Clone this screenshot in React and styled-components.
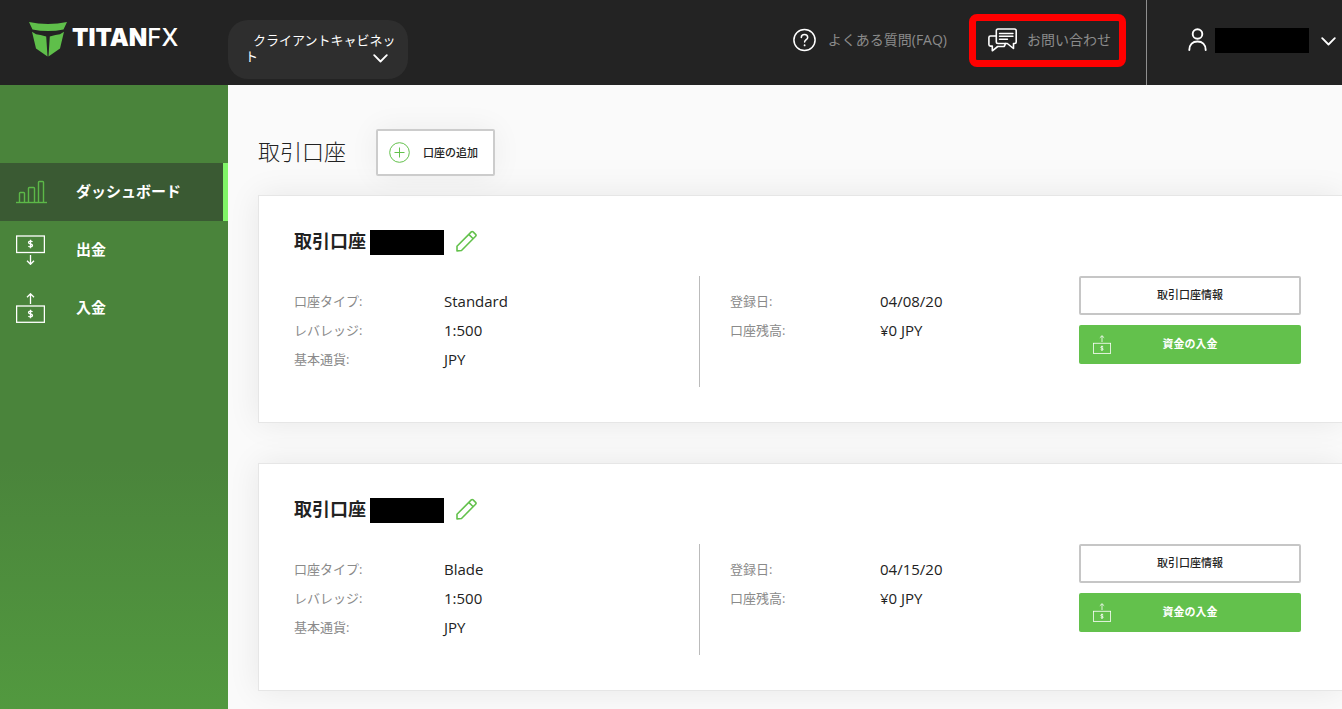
import React from "react";
import styled, { createGlobalStyle, css } from "styled-components";

const GlobalStyle = createGlobalStyle`
  *, *::before, *::after { box-sizing: border-box; }
  body {
    margin: 0;
    background: #fafafa;
    color: #222;
    font-family: "Open Sans", "Noto Sans CJK JP", sans-serif;
    font-size: 13px;
    overflow-x: hidden;
  }
  button { font-family: inherit; cursor: pointer; }
  a { text-decoration: none; color: inherit; }
  h1, h2, p, dl, dd, ul { margin: 0; padding: 0; }
`;

const Page = styled.div`
  min-height: 100vh;
  display: flex;
  flex-direction: column;
`;

const Header = styled.header`
  display: flex;
  height: 85px;
  background: #232323;
  color: #fff;
`;

const LogoLink = styled.a`
  flex: 0 0 228px;
  display: flex;
  align-items: flex-start;
  gap: 4px;
  padding: 20px 0 0 28px;
`;

const LogoText = styled.span`
  padding-top: 3px;
  font-family: Inter, sans-serif;
  font-size: 24px;
  line-height: 30px;
  font-weight: 900;
  color: #fff;
`;

const LogoLight = styled.span`
  font-weight: 500;
`;

const CabinetButton = styled.button`
  position: relative;
  align-self: flex-start;
  width: 180px;
  height: 59px;
  margin-top: 20px;
  padding: 0 8px 4px 17px;
  border: 0;
  border-radius: 20px;
  background: #2e2e2e;
  color: #fff;
  font-size: 13px;
  line-height: 16px;
  text-align: left;
  text-indent: 8px;
`;

const CabinetArrow = styled.span`
  position: absolute;
  right: 20px;
  bottom: 16px;
  display: flex;
`;

const HeaderNav = styled.nav`
  flex: 1;
  display: flex;
  align-items: flex-start;
  justify-content: flex-end;
  gap: 22px;
  padding: 14px 20px 0 0;
`;

const HeaderLink = styled.a`
  display: flex;
  align-items: center;
  height: 53px;
  padding-bottom: 2px;
  gap: ${(p) => (p.$marked ? "10px" : "12px")};
  font-size: 14px;
  line-height: 20px;
  color: #8b8b8b;
  white-space: nowrap;
  ${(p) =>
    p.$marked &&
    css`
      padding: 0 8px 2px 12px;
      border: 7px solid #f00;
      border-radius: 8px;
    `}
`;

const UserButton = styled.button`
  display: flex;
  align-items: flex-start;
  height: 85px;
  padding: 28px 6px 0 41px;
  border: 0;
  border-left: 1px solid #8f8f8f;
  background: none;
  color: #fff;
`;

const Redacted = styled.span`
  display: block;
  width: ${(p) => p.$width};
  height: 25px;
  background: #000;
`;

const UserName = styled(Redacted)`
  margin: 0 12px 0 8px;
`;

const UserArrow = styled.span`
  display: flex;
  padding-top: 9px;
`;

const Body = styled.div`
  flex: 1;
  display: flex;
`;

const Sidebar = styled.aside`
  flex: 0 0 228px;
  padding-top: 78px;
  background: linear-gradient(#4a843b 0%, #4a843b 60%, #52993f 100%);
`;

const SideLink = styled.a`
  display: flex;
  align-items: center;
  height: 58px;
  padding: 0 0 2px 16px;
  gap: 29px;
  color: #fff;
  font-size: 15px;
  line-height: 20px;
  font-weight: 700;
  ${(p) =>
    p.$active &&
    css`
      background: #3a5a33;
      border-right: 5px solid #80f568;
    `}
`;

const SideIcon = styled.span`
  display: flex;
  width: 31px;
  padding-top: 2px;
`;

const Main = styled.main`
  flex: 1;
  min-width: 0;
  padding: 44px 0 0 30px;
  overflow: hidden;
`;

const Heading = styled.div`
  display: flex;
  align-items: center;
  gap: 30px;
  margin-bottom: 19px;
`;

const Title = styled.h1`
  padding-bottom: 4px;
  font-size: 22px;
  line-height: 32px;
  font-weight: 300;
`;

const AddButton = styled.button`
  display: flex;
  align-items: center;
  gap: 13px;
  height: 47px;
  padding: 0 15px 0 11px;
  border: 2px solid #ccc;
  border-radius: 2px;
  background: #fff;
  box-shadow: 0 0 30px rgba(0, 0, 0, 0.06);
  color: #222;
  font-size: 11px;
  line-height: 16px;
  font-weight: 500;
`;

const Card = styled.section`
  padding: 34px 41px 35px 35px;
  margin-bottom: ${(p) => (p.$last ? "0" : "40px")};
  border: 1px solid #e6e6e6;
  border-right: 0;
  background: #fff;
  box-shadow: 0 0 30px rgba(0, 0, 0, 0.08);
`;

const CardHead = styled.div`
  display: flex;
  align-items: center;
  height: 25px;
  margin-bottom: 21px;
`;

const CardTitle = styled.h2`
  margin-right: 4px;
  padding-bottom: 2px;
  font-size: 18px;
  line-height: 25px;
  font-weight: 700;
`;

const EditButton = styled.button`
  display: flex;
  margin-left: 12px;
  padding: 0 0 4px;
  border: 0;
  background: none;
`;

const CardGrid = styled.div`
  display: grid;
  grid-template-columns: 406fr 379fr 222px;
`;

const Details = styled.dl`
  min-height: 111px;
  padding-top: 11px;
  padding-left: ${(p) => (p.$divided ? "0" : "30px")};
  border-right: ${(p) => (p.$divided ? "1px solid #bbb" : "0")};
`;

const Detail = styled.div`
  display: flex;
  height: 29px;
  line-height: 29px;
`;

const Term = styled.dt`
  flex: 0 0 150px;
  font-size: 13px;
  font-weight: 400;
  color: #8a8a8a;
`;

const Value = styled.dd`
  font-size: 15px;
  line-height: 28px;
`;

const Actions = styled.div`
  display: flex;
  flex-direction: column;
  gap: 10px;
`;

const ActionButton = styled.button`
  display: grid;
  grid-template-columns: 19px 1fr 19px;
  align-items: center;
  height: 39px;
  padding: 0 ${(p) => (p.$primary ? "14px" : "12px")};
  border: ${(p) => (p.$primary ? "0" : "2px solid #c6c6c6")};
  border-radius: 2px;
  background: ${(p) => (p.$primary ? "#63c14c" : "#fff")};
  color: ${(p) => (p.$primary ? "#fff" : "#222")};
  font-size: 11px;
  line-height: 16px;
  font-weight: ${(p) => (p.$primary ? 700 : 500)};
`;

const ActionLabel = styled.span`
  grid-column: 2;
  padding-bottom: 2px;
  text-align: center;
`;

const LogoMark = () => (
  <svg width="40" height="38" viewBox="0 0 40 38" fill="#5fbf4a" aria-hidden="true">
    <path d="M1 2Q10 4 20 4Q30 4 39 2L35.500 9.500Q28 11 20 11Q12 11 4.500 9.500Z" />
    <path d="M4 11.800L8 14.200Q12 14.800 18.200 16.500L19.500 36.500L8 28.500Z" />
    <path d="M36 11.800L32 14.200Q28 14.800 21.800 16.500L20.500 36.500L32 28.500Z" />
  </svg>
);

const Chevron = () => (
  <svg width="15" height="9" viewBox="0 0 15 9" fill="none" stroke="#fff" strokeWidth="1.8" strokeLinecap="round" strokeLinejoin="round" aria-hidden="true">
    <path d="M1.200 1.200L7.500 7.500L13.800 1.200" />
  </svg>
);

const HelpIcon = () => (
  <svg width="23" height="24" viewBox="0 0 23 24" fill="none" stroke="#fff" strokeWidth="1.5" strokeLinecap="round" aria-hidden="true">
    <circle cx="11.500" cy="12" r="10.600" />
    <path d="M8.300 9.500C8.300 7.600 9.700 6.500 11.500 6.500S14.700 7.700 14.700 9.400C14.700 11.500 11.600 11.700 11.600 14" />
    <path d="M11.600 17.200V17.400" strokeWidth="1.800" />
  </svg>
);

const ChatIcon = () => (
  <svg width="29" height="24" viewBox="0 0 29 24" fill="none" stroke="#fff" strokeWidth="1.600" strokeLinejoin="round" strokeLinecap="round" aria-hidden="true">
    <path d="M10 1H26.500Q28.200 1 28.200 2.700V13.800Q28.200 15.500 26.500 15.500H25.500V20.500L19.300 15.500H10Q8.300 15.500 8.300 13.800V2.700Q8.300 1 10 1Z" />
    <path d="M8.300 8H2.500Q.9 8 .9 9.600V16.500Q.9 18.100 2.500 18.100H4.300V22.800L9.700 18.500H15.500Q16.800 18.500 17.300 15.500" />
    <path d="M11.500 5.500H25M11.500 8.300H25M11.500 11.200H19.500" strokeWidth="1.400" />
  </svg>
);

const UserIcon = () => (
  <svg width="19" height="24" viewBox="0 0 19 24" fill="none" stroke="#fff" strokeWidth="1.900" strokeLinecap="round" aria-hidden="true">
    <circle cx="9.500" cy="6" r="4.800" />
    <path d="M1.300 22C1.300 16.500 4.800 13.500 9.500 13.500S17.700 16.500 17.700 22" />
  </svg>
);

const ChartIcon = () => (
  <svg width="31" height="24" viewBox="0 1 31 24" fill="none" stroke="#5cb848" strokeWidth="1.400" aria-hidden="true">
    <path d="M0 23.500H31" />
    <path d="M3.500 23V14.300Q3.500 13.500 4.300 13.500H7.700Q8.500 13.500 8.500 14.300V23" />
    <path d="M12.500 23V9.300Q12.500 8.500 13.300 8.500H17.700Q18.500 8.500 18.500 9.300V23" />
    <path d="M22.500 23V3.300Q22.500 2.500 23.300 2.500H26.700Q27.500 2.500 27.500 3.300V23" />
  </svg>
);

const DollarPath = "M16.500 6.900Q15.800 6.200 14.500 6.200Q12.500 6.200 12.500 7.600C12.500 9.400 16.500 8.600 16.500 10.500Q16.500 11.900 14.500 11.900Q13.100 11.900 12.400 11.100M14.500 4.800V13.200";

const WithdrawIcon = () => (
  <svg width="29" height="30" viewBox="0 0 29 30" fill="none" stroke="#fff" strokeWidth="1.300" aria-hidden="true">
    <rect x=".6" y="1" width="27.800" height="16.500" />
    <path d={DollarPath} />
    <path d="M14.500 20V29M11 25.800L14.500 29.300L18 25.800" />
  </svg>
);

const DepositIcon = ({ size = 29 }) => (
  <svg width={size} height={size + 1} viewBox="0 0 29 30" fill="none" stroke="#fff" strokeWidth="1.300" aria-hidden="true">
    <rect x=".6" y="13" width="27.800" height="16.300" />
    <g transform="translate(0 12)">
      <path d={DollarPath} />
    </g>
    <path d="M14.500 11V1M11 4.200L14.500 .8L18 4.200" />
  </svg>
);

const PlusIcon = () => (
  <svg width="21" height="21" viewBox="0 0 21 21" fill="none" stroke="#63c14c" aria-hidden="true">
    <circle cx="10.500" cy="10.500" r="9.800" />
    <path d="M10.500 5.500V15.500M5.500 10.500H15.500" />
  </svg>
);

const PencilIcon = () => (
  <svg width="21" height="22" viewBox="0 0 21 22" fill="none" stroke="#63c14c" strokeWidth="1.600" strokeLinejoin="round" aria-hidden="true">
    <path d="M1 16.300L15.300 1.900Q16.200 1 17.100 1.900L19.600 4.400Q20.500 5.300 19.600 6.200L5.500 20.500L1 20.900Z" />
    <path d="M12.800 4.400L17.200 8.700" />
  </svg>
);

const navItems = [
  { label: "ダッシュボード", icon: ChartIcon, active: true },
  { label: "出金", icon: WithdrawIcon },
  { label: "入金", icon: DepositIcon },
];

const accounts = [
  { type: "Standard", date: "04/08/20" },
  { type: "Blade", date: "04/15/20" },
];

function DetailList({ rows, divided }) {
  return (
    <Details $divided={divided}>
      {rows.map(([term, value]) => (
        <Detail key={term}>
          <Term>{term}</Term>
          <Value>{value}</Value>
        </Detail>
      ))}
    </Details>
  );
}

function AccountCard({ account, last }) {
  return (
    <Card $last={last}>
      <CardHead>
        <CardTitle>取引口座</CardTitle>
        <Redacted $width="74px" />
        <EditButton type="button" aria-label="編集">
          <PencilIcon />
        </EditButton>
      </CardHead>
      <CardGrid>
        <DetailList
          divided
          rows={[
            ["口座タイプ:", account.type],
            ["レバレッジ:", "1:500"],
            ["基本通貨:", "JPY"],
          ]}
        />
        <DetailList
          rows={[
            ["登録日:", account.date],
            ["口座残高:", "¥0 JPY"],
          ]}
        />
        <Actions>
          <ActionButton type="button">
            <ActionLabel>取引口座情報</ActionLabel>
          </ActionButton>
          <ActionButton type="button" $primary>
            <DepositIcon size={18} />
            <ActionLabel>資金の入金</ActionLabel>
          </ActionButton>
        </Actions>
      </CardGrid>
    </Card>
  );
}

export default function App() {
  return (
    <Page lang="ja">
      <GlobalStyle />
      <Header>
        <LogoLink href="#">
          <LogoMark />
          <LogoText>
            TITAN<LogoLight>FX</LogoLight>
          </LogoText>
        </LogoLink>
        <CabinetButton type="button">
          クライアントキャビネット
          <CabinetArrow>
            <Chevron />
          </CabinetArrow>
        </CabinetButton>
        <HeaderNav>
          <HeaderLink href="#">
            <HelpIcon />
            よくある質問(FAQ)
          </HeaderLink>
          <HeaderLink href="#" $marked>
            <ChatIcon />
            お問い合わせ
          </HeaderLink>
        </HeaderNav>
        <UserButton type="button" aria-label="アカウント">
          <UserIcon />
          <UserName $width="94px" />
          <UserArrow>
            <Chevron />
          </UserArrow>
        </UserButton>
      </Header>
      <Body>
        <Sidebar>
          <nav>
            {navItems.map(({ label, icon: Icon, active }) => (
              <SideLink key={label} href="#" $active={active}>
                <SideIcon>
                  <Icon />
                </SideIcon>
                {label}
              </SideLink>
            ))}
          </nav>
        </Sidebar>
        <Main>
          <Heading>
            <Title>取引口座</Title>
            <AddButton type="button">
              <PlusIcon />
              口座の追加
            </AddButton>
          </Heading>
          {accounts.map((account, i) => (
            <AccountCard key={account.type} account={account} last={i === accounts.length - 1} />
          ))}
        </Main>
      </Body>
    </Page>
  );
}
